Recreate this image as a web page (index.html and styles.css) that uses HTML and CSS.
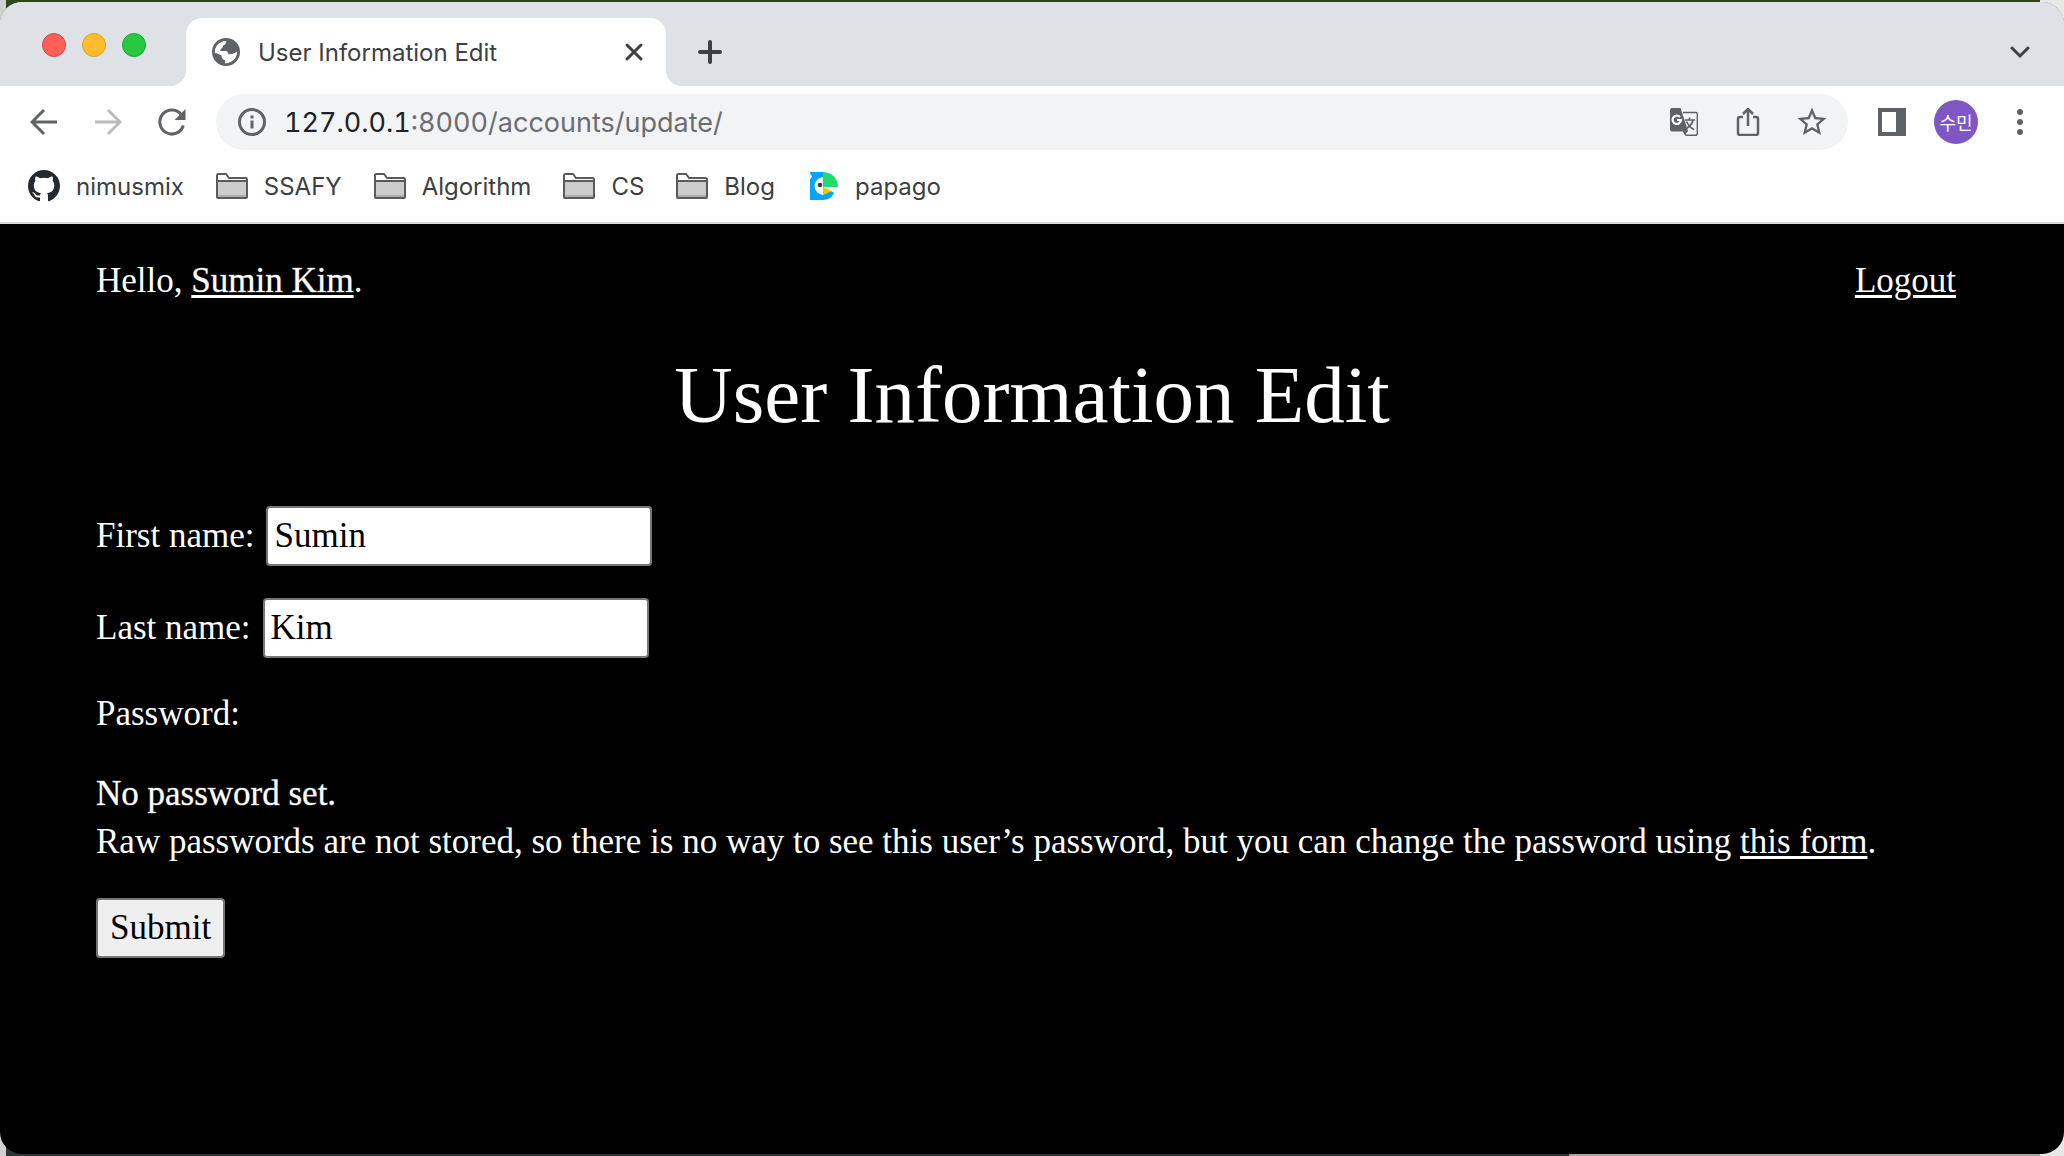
FILE: index.html
```html
<!DOCTYPE html>
<html lang="en">
<head>
<meta charset="utf-8">
<meta name="viewport" content="width=device-width, initial-scale=1">
<title>User Information Edit</title>
<link rel="stylesheet" href="styles.css">
</head>
<body>
<svg width="0" height="0" hidden>
  <symbol id="folder" viewBox="0 0 32 26">
    <path d="M1 24V2.500Q1 1 2.500 1H10L13 5H29.500Q31 5 31 6.500V24Q31 25 30 25H2Q1 25 1 24Z" fill="#fff"/>
    <path d="M1 8H31V25H1Z" fill="#ccc"/>
    <path d="M2 22H30V24H2Z" fill="#adadad"/>
    <path d="M1 24V2.500Q1 1 2.500 1H10L13 5H29.500Q31 5 31 6.500V24Q31 25 30 25H2Q1 25 1 24ZM1 8H31" fill="none" stroke="#5a5a5a" stroke-width="2"/>
  </symbol>
</svg>
<div class="window">
  <header class="browser">
    <div class="tab-strip">
      <div class="lights">
        <button class="light light-close" aria-label="Close window"></button>
        <button class="light light-minimize" aria-label="Minimize window"></button>
        <button class="light light-zoom" aria-label="Zoom window"></button>
      </div>
      <div class="tab">
        <svg class="tab-icon" viewBox="0 0 28 28" aria-hidden="true">
          <circle cx="14" cy="14" r="14" fill="#5f6368"/>
          <path d="M14.500 3C15 5 13 7 11.500 7.500C10.500 8 11 9.500 9.500 10.500C8.500 11 8 11.500 8.500 13H13.500C15.500 13 16.500 14.500 16.500 16.500H19.500C21 16.500 21 18 20 19C18.500 20 18 20.500 18 22C18 24 16 25.500 13 25.200C14 23 13 22 11.500 21.500C9.500 21 9.500 18.500 9.500 17.500C7.500 16.500 5.500 15 2.800 15C2.300 8.500 7.500 2.800 14.500 3Z" fill="#fff"/>
          <path d="M14.500 3C15 5 13 7 11.500 7.500C10.500 8 11 9.500 12.500 10C14 11 18 10 19 11.500C20 13 23 13.500 25.200 12.500C24.500 7 20 3 14.500 3Z" fill="#5f6368"/>
          <path d="M25.200 13.500C25.500 19 21 25 13.500 25.200C14.500 22.500 12.500 22 14.500 20.500C17.500 19.500 15 16 19 16C21.500 16 23 15 25.200 13.500Z" fill="#fff"/>
        </svg>
        <span class="tab-title">User Information Edit</span>
        <button class="icon-button" aria-label="Close tab"><svg width="20" height="20" viewBox="0 0 20 20"><path d="M3 3L17 17M17 3L3 17" class="dark-stroke"/></svg></button>
      </div>
      <button class="icon-button new-tab" aria-label="New tab"><svg width="24" height="24" viewBox="0 0 24 24"><path d="M12 2V22M2 12H22" class="dark-stroke thick"/></svg></button>
      <button class="icon-button tab-search" aria-label="Search tabs"><svg width="20" height="20" viewBox="0 0 20 20"><path d="M2 6L10 14L18 6" class="dark-stroke"/></svg></button>
    </div>
    <div class="toolbar">
      <div class="nav">
        <button class="icon-button" aria-label="Back"><svg width="28" height="28" viewBox="0 0 28 28"><path d="M27 14H3M14 2L2 14L14 26" class="line"/></svg></button>
        <button class="icon-button" aria-label="Forward" disabled><svg width="28" height="28" viewBox="0 0 28 28"><path d="M1 14H25M14 2L26 14L14 26" class="line faint"/></svg></button>
        <button class="icon-button" aria-label="Reload"><svg width="28" height="28" viewBox="0 0 28 28"><path d="M23.500 7A12 12 0 1 0 25.300 17.500" class="line"/><path d="M27.500 1V12H16.500Z" fill="#5f6368"/></svg></button>
      </div>
      <div class="omnibox">
        <svg width="28" height="28" viewBox="0 0 28 28" aria-hidden="true"><circle cx="14" cy="14" r="12.500" class="line"/><path d="M14 12.500V20.500M14 7.500V10.500" class="line"/></svg>
        <div class="url" role="textbox" aria-label="Address"><span class="host">127.0.0.1</span>:8000/accounts/update/</div>
        <div class="omni-actions">
          <button class="icon-button" aria-label="Translate this page"><svg width="28" height="28" viewBox="0 0 28 28"><path d="M13 4.500H26Q27.300 4.500 27.300 6V25.500Q27.300 27.300 26 27.300H16L13 22" fill="none" stroke="#5f6368" stroke-width="1.400"/><path d="M2 0H10.500L18 23L15 27L13 23.500H2Q0 23.500 0 21.500V2Q0 0 2 0Z" fill="#5f6368"/><path d="M10 9A4.200 4.200 0 1 0 11 12H7" fill="none" stroke="#fff" stroke-width="2.200"/><path d="M15 12H25M19.500 9.500V12M23 12Q22 17 16.500 20.500M16.500 13.500Q19 19 24 21.500" fill="none" stroke="#5f6368" stroke-width="1.700"/></svg></button>
          <button class="icon-button" aria-label="Share"><svg width="28" height="28" viewBox="0 0 28 28"><path d="M9 9H6Q4 9 4 11V25Q4 27 6 27H22Q24 27 24 25V11Q24 9 22 9H19M14 18V1M9 6L14 1L19 6" fill="none" stroke="#5f6368" stroke-width="2.500"/></svg></button>
          <button class="icon-button" aria-label="Bookmark this page"><svg width="32" height="32" viewBox="1 1 22 22"><path fill="#5f6368" d="M22 9.240l-7.190-.620L12 2 9.190 8.630 2 9.240l5.460 4.730L5.820 21 12 17.270 18.180 21l-1.630-7.030L22 9.240zM12 15.400l-3.760 2.270 1-4.280-3.320-2.880 4.380-.380L12 6.100l1.710 4.040 4.380.380-3.320 2.880 1 4.280L12 15.400z"/></svg></button>
        </div>
      </div>
      <div class="browser-actions">
        <button class="icon-button" aria-label="Side panel"><svg width="28" height="28" viewBox="0 0 28 28"><path fill="#5f6368" fill-rule="evenodd" d="M0 0H28V28H0ZM4 4V24H18V4Z"/></svg></button>
        <button class="avatar">수민</button>
        <button class="icon-button" aria-label="Browser menu"><svg width="28" height="28" viewBox="0 0 28 28"><g fill="#5f6368"><circle cx="14" cy="4" r="3"/><circle cx="14" cy="14" r="3"/><circle cx="14" cy="24" r="3"/></g></svg></button>
      </div>
    </div>
    <nav class="bookmarks" aria-label="Bookmarks">
      <a href="#"><svg width="32" height="32" viewBox="0 0 16 16" aria-hidden="true"><path fill="#24292f" d="M8 0C3.580 0 0 3.580 0 8c0 3.540 2.290 6.530 5.470 7.590.4.070.55-.17.55-.38 0-.19-.01-.82-.01-1.490-2.010.37-2.530-.49-2.690-.94-.09-.23-.48-.94-.82-1.130-.28-.15-.68-.52-.01-.53.63-.01 1.080.58 1.230.82.72 1.210 1.870.87 2.330.66.07-.52.28-.87.51-1.070-1.780-.2-3.640-.89-3.640-3.950 0-.87.31-1.590.82-2.150-.08-.2-.36-1.020.08-2.120 0 0 .67-.21 2.200.82.64-.18 1.320-.27 2-.27s1.360.09 2 .27c1.530-1.040 2.200-.82 2.200-.82.44 1.100.16 1.920.08 2.120.51.56.82 1.270.82 2.150 0 3.070-1.870 3.750-3.650 3.950.29.25.54.73.54 1.480 0 1.070-.01 1.930-.01 2.200 0 .21.15.46.55.38A8.010 8.010 0 0 0 16 8c0-4.420-3.580-8-8-8z"/></svg>nimusmix</a>
      <a href="#"><svg width="32" height="26" aria-hidden="true"><use href="#folder"/></svg>SSAFY</a>
      <a href="#"><svg width="32" height="26" aria-hidden="true"><use href="#folder"/></svg>Algorithm</a>
      <a href="#"><svg width="32" height="26" aria-hidden="true"><use href="#folder"/></svg>CS</a>
      <a href="#"><svg width="32" height="26" aria-hidden="true"><use href="#folder"/></svg>Blog</a>
      <a href="#"><svg width="32" height="28" viewBox="-3 0 32 28" aria-hidden="true"><path fill="#03a5ff" d="M0 0H14V28H0V7Q2.500 5 2 4Q0 3 0 0Z"/><path fill="#03a5ff" d="M13 28V22L21 19L24 21Q21 28 13 28Z"/><path fill="#fff" d="M13.500 5V23A9 9 0 0 1 13.500 5Z"/><circle cx="10" cy="13" r="2.300" fill="#333d4d"/><path fill="#1edd6e" d="M13 0Q27 1 28 15H13Z"/><path fill="#ffc400" d="M13 15L22 19L13 23Z"/></svg>papago</a>
    </nav>
  </header>
  <main class="page">
    <div class="account">
      <span>Hello, <a href="#"><strong>Sumin Kim</strong></a>.</span>
      <a href="#">Logout</a>
    </div>
    <h1>User Information Edit</h1>
    <form class="edit-form">
      <div class="field"><label for="first-name">First name:</label><input id="first-name" type="text" value="Sumin"></div>
      <div class="field"><label for="last-name">Last name:</label><input id="last-name" type="text" value="Kim"></div>
      <p class="password-label">Password:</p>
      <p class="password-help"><strong>No password set.</strong><br>Raw passwords are not stored, so there is no way to see this user’s password, but you can change the password using <a href="#">this form</a>.</p>
      <button class="submit" type="submit">Submit</button>
    </form>
  </main>
</div>
</body>
</html>
```
FILE: styles.css
```css
* {
  box-sizing: border-box;
}

body {
  margin: 0;
  min-height: 100vh;
  display: flex;
  padding: 2px 0;
  background:
    linear-gradient(90deg, #d0d0d0 6px, transparent 6px, transparent calc(100% - 24px), #e8e8e8 calc(100% - 24px)),
    linear-gradient(#2f471c, #2f471c) top / 100% 50% no-repeat,
    linear-gradient(90deg, #303334 76%, #a5a3a3 76%) bottom / 100% 50% no-repeat;
}

button {
  font: inherit;
  cursor: pointer;
}

svg {
  display: block;
  flex: none;
}

.window {
  flex: 1;
  min-width: 0;
  display: flex;
  flex-direction: column;
  border-radius: 22px;
  overflow: hidden;
  background: #000;
}

.browser {
  font-family: Inter, "Noto Sans CJK KR", sans-serif;
  font-size: 24px;
  color: #3c4043;
  background: #fff;
  border-bottom: 2px solid #dcdcdc;
}

.tab-strip {
  display: flex;
  align-items: stretch;
  height: 84px;
  padding: 16px 34px 0 42px;
  background: #dee1e6;
}

.lights {
  display: flex;
  gap: 16px;
  padding-top: 15px;
  margin-right: 40px;
}

.light {
  width: 24px;
  height: 24px;
  padding: 0;
  border: 1px solid;
  border-radius: 50%;
}

.light-close {
  background: #ff5f57;
  border-color: #e2463f;
}

.light-minimize {
  background: #febc2e;
  border-color: #e1a116;
}

.light-zoom {
  background: #28c840;
  border-color: #12ac28;
}

.tab {
  position: relative;
  display: flex;
  align-items: center;
  width: 480px;
  padding: 0 22px 0 26px;
  border-radius: 16px 16px 0 0;
  background: #fff;
}

.tab::before,
.tab::after {
  content: "";
  position: absolute;
  bottom: 0;
  width: 16px;
  height: 16px;
}

.tab::before {
  right: 100%;
  background: radial-gradient(circle at 0 0, transparent 16px, #fff 16px);
}

.tab::after {
  left: 100%;
  background: radial-gradient(circle at 100% 0, transparent 16px, #fff 16px);
}

.tab-icon {
  width: 28px;
  height: 28px;
}

.tab-title {
  flex: 1;
  padding-left: 18px;
}

.icon-button {
  display: flex;
  align-items: center;
  justify-content: center;
  padding: 0;
  border: 0;
  background: none;
}

.new-tab {
  margin-left: 32px;
}

.tab-search {
  margin-left: auto;
}

.dark-stroke {
  fill: none;
  stroke: #3c4043;
  stroke-width: 3;
  stroke-linecap: round;
}

.thick {
  stroke-width: 4;
}

.line {
  fill: none;
  stroke: #5f6368;
  stroke-width: 3;
}

.faint {
  stroke: #babcbe;
}

.toolbar {
  display: flex;
  align-items: center;
  gap: 30px;
  padding: 8px 30px 0;
}

.nav {
  display: flex;
  gap: 36px;
}

.omnibox {
  flex: 1;
  display: flex;
  align-items: center;
  gap: 18px;
  height: 56px;
  padding: 0 20px 0 22px;
  border-radius: 28px;
  background: #f1f3f4;
}

.url {
  flex: 1;
  font-size: 27px;
  font-variant-numeric: tabular-nums;
  color: #6b6d70;
}

.host {
  color: #202124;
}

.omni-actions {
  display: flex;
  gap: 32px;
}

.omni-actions .icon-button {
  width: 32px;
}

.browser-actions {
  display: flex;
  align-items: center;
  gap: 28px;
}

.avatar {
  width: 44px;
  height: 44px;
  padding: 0;
  border: 0;
  border-radius: 50%;
  background: #7e57c2;
  color: #fff;
  font-size: 18px;
}

.bookmarks {
  display: flex;
  align-items: center;
  gap: 32px;
  height: 72px;
  padding: 0 28px;
}

.bookmarks a {
  display: flex;
  align-items: center;
  gap: 16px;
  color: inherit;
  text-decoration: none;
}

.page {
  flex: 1;
  padding: 33px 96px 96px;
  color: #fff;
  font-family: "Liberation Serif", serif;
  font-size: 35px;
  line-height: 48px;
}

.page a {
  color: inherit;
  text-decoration-thickness: 3px;
  text-underline-offset: 3px;
}

.page strong {
  font-weight: 400;
  -webkit-text-stroke: 1px rgba(255, 255, 255, 0.35);
}

.account {
  display: flex;
  justify-content: space-between;
  padding-right: 12px;
}

h1 {
  margin: 42px 0 63px;
  font-size: 81px;
  font-weight: 400;
  line-height: 96px;
  text-align: center;
}

.field {
  display: flex;
  align-items: center;
  gap: 12px;
  margin-bottom: 32px;
}

.field input {
  width: 386px;
  height: 60px;
  padding: 2px 6px;
  border: 2px solid #767676;
  border-radius: 4px;
  background: #fff;
  color: #000;
  font: inherit;
}

.page p {
  margin: 0 0 32px;
}

.submit {
  height: 60px;
  padding: 0 12px;
  border: 2px solid #767676;
  border-radius: 4px;
  background: #efefef;
  color: #000;
}
```
